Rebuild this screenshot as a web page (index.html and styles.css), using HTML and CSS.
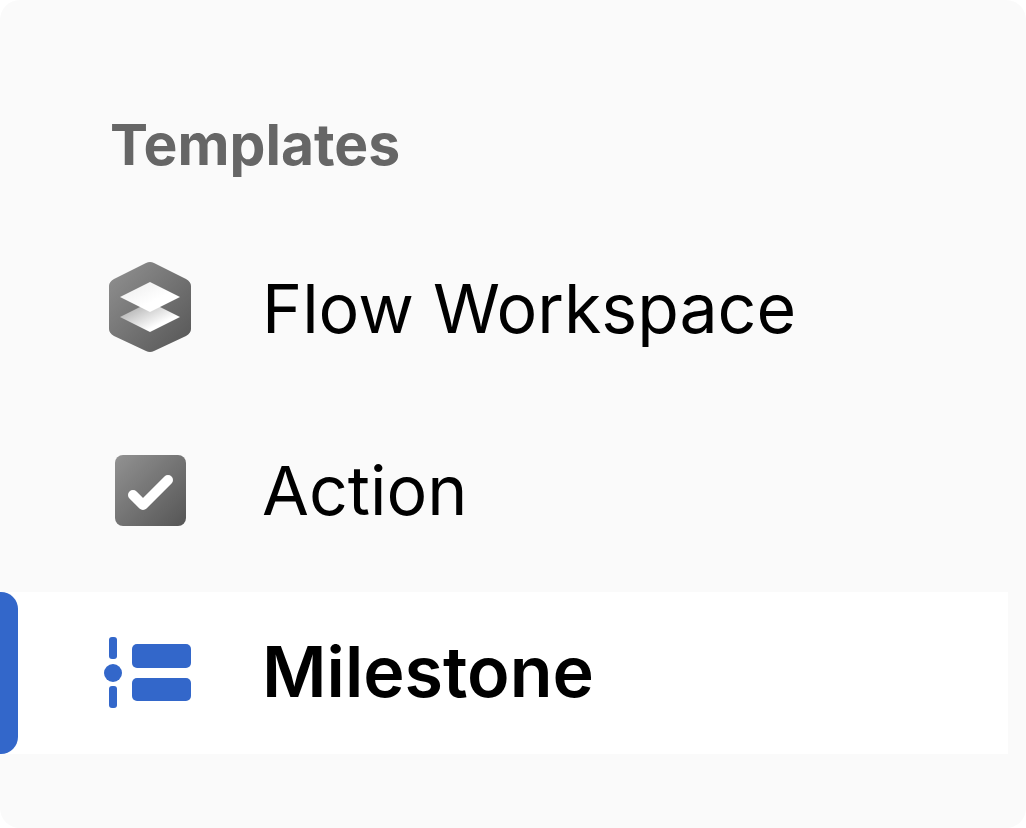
FILE: index.html
```html
<!DOCTYPE html>
<html lang="en">
<head>
<meta charset="utf-8">
<meta name="viewport" content="width=device-width, initial-scale=1">
<title>Templates</title>
<link rel="stylesheet" href="styles.css">
</head>
<body>
<nav class="panel" aria-labelledby="templates-heading">
  <h2 class="heading" id="templates-heading">Templates</h2>
  <ul class="list">
    <li><a class="item" href="#workspace">
      <svg class="icon" viewBox="0 0 96 96" aria-hidden="true">
        <defs>
          <linearGradient id="gray" x1="0" y1="0" x2="1" y2="1"><stop offset="0" stop-color="#929292"/><stop offset="1" stop-color="#555"/></linearGradient>
          <linearGradient id="top-sheet" x1="0" y1="0" x2="1" y2="1"><stop offset="0.2" stop-color="#f2f2f2"/><stop offset="0.6" stop-color="#fff"/></linearGradient>
          <linearGradient id="low-sheet" x1="0" y1="0" x2="1" y2="1"><stop offset="0.2" stop-color="#b8b8b8"/><stop offset="0.7" stop-color="#fff"/></linearGradient>
        </defs>
        <path d="M44 2q4-2 8 0l32 16q5 3 5 7v43q0 4-5 7L52 90q-4 2-8 0L12 75q-5-3-5-7V25q0-4 5-7z" fill="url(#gray)"/>
        <path d="M18 56l30-15 30 15-30 15z" fill="url(#low-sheet)"/>
        <path d="M18 36l30-15 30 15-30 15z" fill="url(#top-sheet)"/>
      </svg>
      <span class="label">Flow Workspace</span></a></li>
    <li><a class="item" href="#action">
      <svg class="icon" viewBox="0 0 96 96" aria-hidden="true">
        <rect x="13" y="12" width="71" height="71" rx="8" fill="url(#gray)"/>
        <path d="M31 52l10 10 25-25" fill="none" stroke="#fff" stroke-width="10" stroke-linecap="round" stroke-linejoin="round"/>
      </svg>
      <span class="label">Action</span></a></li>
    <li><a class="item item-active" href="#milestone" aria-current="page">
      <svg class="icon" viewBox="0 0 96 96" aria-hidden="true" fill="#3367ca">
        <rect x="7" y="12" width="8" height="22" rx="3"/>
        <circle cx="11" cy="48" r="9"/>
        <rect x="7" y="61" width="8" height="22" rx="3"/>
        <rect x="30" y="19" width="59" height="24" rx="5"/>
        <rect x="30" y="53" width="59" height="23" rx="5"/>
      </svg>
      <span class="label">Milestone</span></a></li>
  </ul>
</nav>
</body>
</html>
```
FILE: styles.css
```css
* { box-sizing: border-box; }
body { margin: 0; background: #fff; font-family: Inter, "Liberation Sans", sans-serif; }
.panel { min-height: 100vh; padding: 110px 18px 74px 0; background: #fafafa; border-radius: 20px; }
.heading { margin: 0 0 48px; padding-left: 110px; color: #666; font-size: 57px; line-height: 70px; font-weight: 700; }
.list { margin: 0; padding: 0; list-style: none; display: flex; flex-direction: column; gap: 20px; }
.item { display: flex; align-items: center; gap: 64px; min-height: 162px; padding-left: 102px; color: #000; text-decoration: none; position: relative; }
.icon { width: 96px; height: 96px; flex: none; }
.label { padding-bottom: 2px; font-size: 68px; line-height: 84px; white-space: nowrap; }
.item-active { background: #fff; }
.item-active .label { font-size: 70px; font-weight: 600; }
.item-active::before { content: ""; position: absolute; left: 0; top: 0; bottom: 0; width: 18px; background: #3367ca; border-radius: 0 17px 17px 0; }
```
